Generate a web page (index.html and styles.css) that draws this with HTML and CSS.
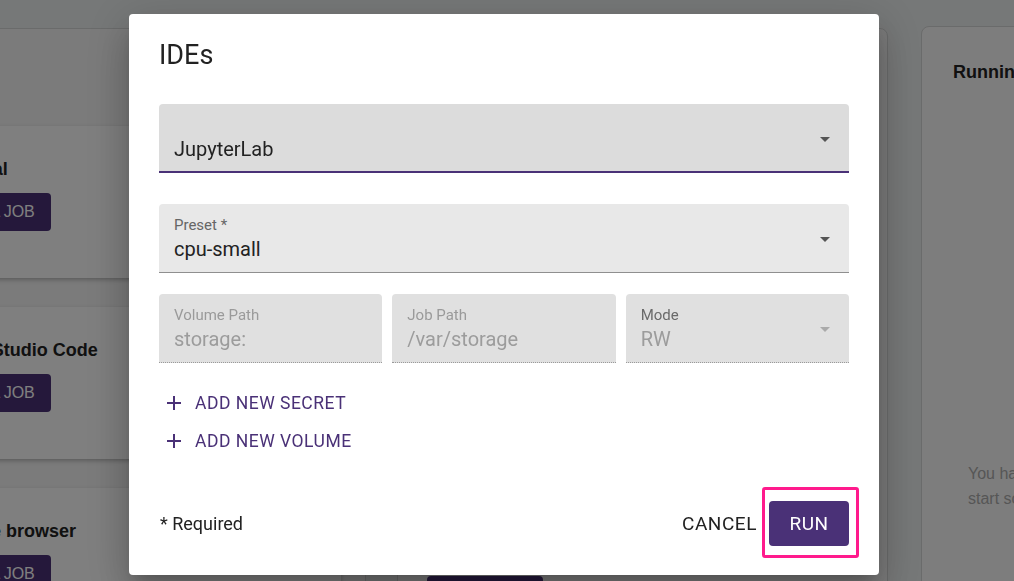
FILE: index.html
```html
<!DOCTYPE html>
<html lang="en">
<head>
<meta charset="utf-8">
<title>IDEs</title>
<link rel="stylesheet" href="styles.css">
</head>
<body>
<div class="page">
  <section class="panel panel-apps">
    <div class="apps-head"></div>
    <div class="app-card">
      <h3 class="app-title">Terminal</h3>
      <button class="job-btn">Run a job</button>
    </div>
    <div class="app-card">
      <h3 class="app-title">Visual Studio Code</h3>
      <button class="job-btn">Run a job</button>
    </div>
    <div class="app-card">
      <h3 class="app-title">Storage browser</h3>
      <button class="job-btn">Run a job</button>
    </div>
  </section>
  <section class="panel panel-main">
    <div class="main-body"></div>
    <button class="job-btn">Run a job</button>
  </section>
  <section class="panel panel-running">
    <h2 class="running-title">Running Jobs</h2>
    <p class="empty">You have no running jobs.<br>start some jobs to see them here.</p>
  </section>
</div>

<div class="backdrop"></div>

<div class="dialog-layer">
  <div class="dialog">
    <h2 class="dialog-title">IDEs</h2>

    <div class="field field-focused">
      <div class="field-text">
        <span class="field-label"></span>
        <span class="field-value">JupyterLab</span>
      </div>
      <svg class="arrow" viewBox="0 0 24 24" width="24" height="24"><path d="M7 10l5 5 5-5z"/></svg>
    </div>

    <div class="field field-normal">
      <div class="field-text">
        <span class="field-label">Preset *</span>
        <span class="field-value">cpu-small</span>
      </div>
      <svg class="arrow" viewBox="0 0 24 24" width="24" height="24"><path d="M7 10l5 5 5-5z"/></svg>
    </div>

    <div class="field-row">
      <div class="field field-disabled">
        <div class="field-text">
          <span class="field-label">Volume Path</span>
          <span class="field-value">storage:</span>
        </div>
      </div>
      <div class="field field-disabled">
        <div class="field-text">
          <span class="field-label">Job Path</span>
          <span class="field-value">/var/storage</span>
        </div>
      </div>
      <div class="field field-disabled">
        <div class="field-text">
          <span class="field-label label-mode">Mode</span>
          <span class="field-value">RW</span>
        </div>
        <svg class="arrow arrow-disabled" viewBox="0 0 24 24" width="24" height="24"><path d="M7 10l5 5 5-5z"/></svg>
      </div>
    </div>

    <div class="add-btns">
      <button class="text-btn"><svg class="plus" viewBox="0 0 24 24" width="24" height="24"><path d="M19 13h-6v6h-2v-6H5v-2h6V5h2v6h6v2z"/></svg>Add new secret</button>
      <button class="text-btn"><svg class="plus" viewBox="0 0 24 24" width="24" height="24"><path d="M19 13h-6v6h-2v-6H5v-2h6V5h2v6h6v2z"/></svg>Add new volume</button>
    </div>

    <div class="dialog-actions">
      <span class="required">* Required</span>
      <div class="actions-right">
        <button class="cancel-btn">Cancel</button>
        <span class="run-wrap">
          <button class="run-btn">Run</button>
          <span class="highlight"></span>
        </span>
      </div>
    </div>
  </div>
</div>
</body>
</html>
```

FILE: styles.css
```css
* { box-sizing: border-box; }

html, body {
  margin: 0;
  padding: 0;
  width: 1014px;
  height: 581px;
  overflow: hidden;
}

body {
  font-family: Roboto, "Liberation Sans", Arial, sans-serif;
  background: #edf0f0;
}

button {
  font-family: inherit;
  border: 0;
  background: none;
  cursor: pointer;
}

/* ---------- background page ---------- */
.page {
  display: flex;
  align-items: flex-start;
  padding-top: 28px;
  margin-left: -120px;
  height: 581px;
  font-family: "Liberation Sans", Arial, sans-serif;
}

.panel {
  background: #f6f6f6;
  border: 1px solid #d4d6d6;
  border-radius: 8px;
  height: 620px;
  flex: none;
}

.panel-apps {
  width: 486px;
  padding: 0 24px;
  border-radius: 0 8px 0 0;
}

.apps-head { height: 97px; }

.app-card {
  background: #ffffff;
  border-radius: 4px;
  box-shadow: 0 2px 4px rgba(0,0,0,0.25);
  height: 152px;
  margin-bottom: 29px;
  padding: 31px 31px 0 29px;
}

.app-title {
  margin: 0 0 12px;
  font-size: 18px;
  line-height: 24px;
  font-weight: 700;
  color: #222;
  white-space: nowrap;
}

.job-btn {
  display: block;
  width: 116px;
  height: 38px;
  border-radius: 4px;
  background: #4a3177;
  color: #fff;
  font-family: "Liberation Sans", Arial, sans-serif;
  font-size: 16px;
  text-transform: uppercase;
}

.app-card .job-btn { margin-left: 1px; }

.panel-main {
  width: 491px;
  margin-left: 31px;
  padding: 0 29px;
}

.main-body { height: 547px; }

.panel-running {
  width: 300px;
  margin-left: 33px;
  margin-top: -2px;
  padding: 32px 31px 0;
  background: #fbfbfb;
}

.running-title {
  margin: 0;
  font-size: 18px;
  line-height: 26px;
  font-weight: 700;
  color: #222;
  white-space: nowrap;
}

.empty {
  margin: 376px 0 0 15px;
  font-size: 16px;
  line-height: 25px;
  color: #acacac;
  white-space: nowrap;
}

.backdrop {
  position: fixed;
  inset: 0;
  background: rgba(0, 0, 0, 0.5);
}

/* ---------- dialog ---------- */
.dialog-layer {
  position: fixed;
  inset: 0;
  padding: 14px 0 0 129px;
}

.dialog {
  width: 750px;
  height: 561px;
  background: #fff;
  border-radius: 4px;
  padding: 25px 30px 29px;
  display: flex;
  flex-direction: column;
  box-shadow: 0 11px 15px -7px rgba(0,0,0,0.2), 0 24px 38px 3px rgba(0,0,0,0.14), 0 9px 46px 8px rgba(0,0,0,0.12);
}

.dialog-title {
  margin: 0 0 33px;
  font-size: 27px;
  line-height: 32px;
  font-weight: 400;
  color: #222;
  padding-left: 0;
}

.field {
  display: flex;
  align-items: flex-start;
  height: 69px;
  border-radius: 4px 4px 0 0;
  padding: 11px 12px 0 15px;
}

.field-text {
  flex: 1;
  display: flex;
  flex-direction: column;
  min-width: 0;
}

.field-label {
  height: 20px;
  font-size: 15px;
  line-height: 20px;
  color: #666;
}

.field-value {
  font-size: 20px;
  line-height: 28px;
  color: #222;
}

.arrow {
  flex: none;
  margin-top: 12px;
  fill: #555;
}

.field-focused {
  background: #dcdcdc;
  border-bottom: 2px solid #4a3177;
  margin-bottom: 31px;
}

.field-normal {
  background: #e8e8e8;
  border-bottom: 1px solid #8f8f8f;
  margin-bottom: 21px;
}

.field-row {
  display: grid;
  grid-template-columns: repeat(3, 1fr);
  gap: 10px;
}

.field-disabled {
  background: #e0e0e0;
  border-bottom: 1px dotted #9a9a9a;
}

.field-disabled .field-label { color: #9a9a9a; }
.field-disabled .label-mode { color: #6a6a6a; }
.field-disabled .field-value { color: #9c9c9c; }
.arrow-disabled { fill: #aaa; }

.add-btns {
  display: flex;
  flex-direction: column;
  align-items: flex-start;
  gap: 2px;
  margin-top: 22px;
}

.text-btn {
  display: inline-flex;
  align-items: center;
  height: 36px;
  padding: 0 8px 0 3px;
  color: #4a3177;
  font-size: 17.5px;
  letter-spacing: 0.02857em;
  text-transform: uppercase;
}

.plus {
  fill: #4a3177;
  margin-right: 9px;
}

.dialog-actions {
  margin-top: auto;
  display: flex;
  align-items: center;
  justify-content: space-between;
}

.required {
  font-size: 18px;
  color: #222;
  padding-left: 1px;
}

.actions-right {
  display: flex;
  align-items: center;
  gap: 4px;
}

.cancel-btn {
  height: 45px;
  padding: 0 8px;
  font-size: 19px;
  letter-spacing: 0.02857em;
  color: #222;
  text-transform: uppercase;
}

.run-wrap {
  position: relative;
  display: block;
}

.run-btn {
  display: block;
  width: 80px;
  height: 45px;
  border-radius: 4px;
  background: #4a3177;
  color: #fff;
  font-size: 19px;
  letter-spacing: 0.02857em;
  text-transform: uppercase;
}

.highlight {
  position: absolute;
  top: -14px;
  left: -7px;
  right: -10px;
  bottom: -12px;
  border: 3px solid #ff1a8c;
  border-radius: 3px;
  pointer-events: none;
}
```
